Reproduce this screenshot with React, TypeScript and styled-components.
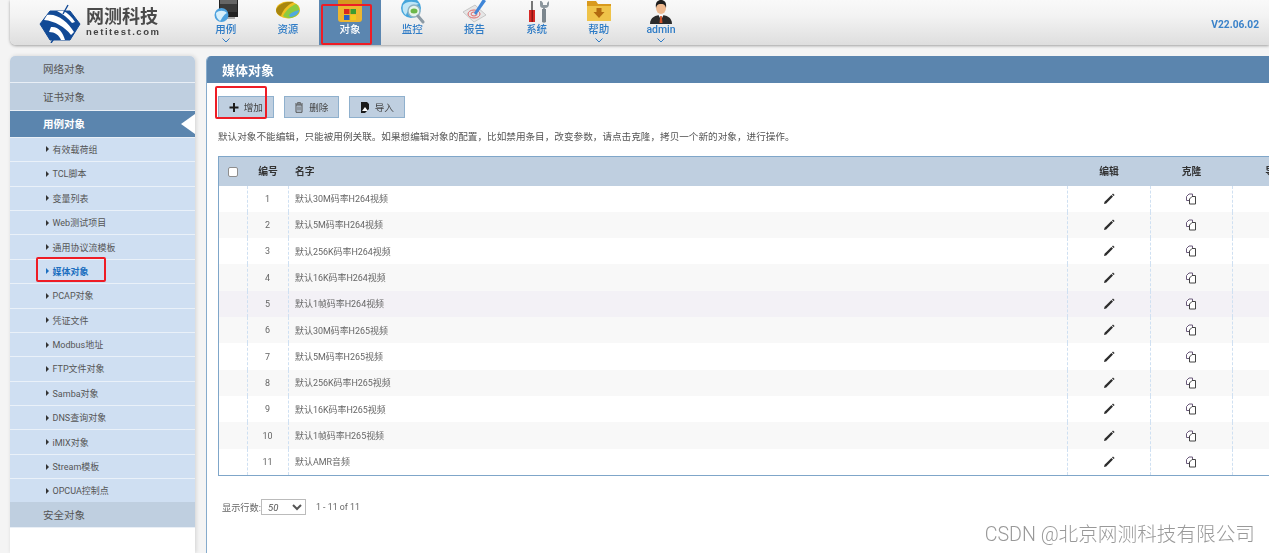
import React from "react";
import styled, { createGlobalStyle } from "styled-components";

const FONT = `Roboto, "Noto Sans CJK SC", "Liberation Sans", sans-serif`;

const Global = createGlobalStyle`
  html, body { margin: 0; padding: 0; height: 553px; overflow: hidden; background: #f4f4f4; }
  body { font-family: ${FONT}; }
  * { box-sizing: border-box; }
`;

const Page = styled.div`
  position: relative;
  width: 1269px;
  height: 553px;
  padding-left: 10px;
  overflow: hidden;
  filter: blur(0.35px);
`;

const Header = styled.header`
  display: flex;
  align-items: stretch;
  height: 45px;
  background: linear-gradient(#f9f9f9, #f3f3f3 35%, #dedede);
  border-radius: 0 0 0 6px;
  box-shadow: 0 1px 3px rgba(0, 0, 0, 0.35);
`;

const LogoBox = styled.div`
  display: flex;
  align-items: center;
  gap: 5px;
  width: 184.6px;
  padding: 0 0 0 29px;
`;

const LogoText = styled.div`
  display: flex;
  flex-direction: column;
  margin-top: -1px;
`;

const LogoCn = styled.span`
  font-size: 18px;
  line-height: 20px;
  font-weight: 700;
  color: #4a4a4a;
  white-space: nowrap;
`;

const LogoEn = styled.span`
  font-family: "Liberation Sans", sans-serif;
  font-size: 9.5px;
  line-height: 10px;
  font-weight: 700;
  letter-spacing: 1.55px;
  color: #444;
  white-space: nowrap;
`;

const Nav = styled.nav`
  display: flex;
`;

const NavItem = styled.div<{ $active?: boolean }>`
  position: relative;
  width: 62.2px;
  display: flex;
  flex-direction: column;
  align-items: center;
  overflow: hidden;
  background: ${(p) => (p.$active ? "#5b86b0" : "transparent")};
  color: ${(p) => (p.$active ? "#fff" : "#2f7cc6")};
`;

const NavIcon = styled.svg`
  display: block;
  width: 26px;
  height: 24px;
  flex: none;
`;

const NavLabel = styled.span`
  font-size: 10.5px;
  line-height: 12px;
  font-weight: 500;
  white-space: nowrap;
`;

const Chevron = styled.svg`
  display: block;
  width: 8px;
  height: 5px;
  margin-top: 2px;
  flex: none;
`;

const Version = styled.div`
  margin: 3px 0 0 auto;
  padding-right: 10px;
  align-self: center;
  font-size: 10.2px;
  font-weight: 700;
  color: #3a82c9;
`;

const Body = styled.div`
  display: flex;
  gap: 11px;
  margin-top: 11px;
  height: 497px;
`;

const Sidebar = styled.aside`
  width: 185px;
  flex: none;
  background: #fff;
  border-radius: 5px 5px 0 0;
  overflow: hidden;
  box-shadow: 1px 0 4px rgba(0, 0, 0, 0.14);
`;

const TopItem = styled.div<{ $active?: boolean; $last?: boolean }>`
  position: relative;
  height: ${(p) => (p.$last ? "26.4px" : p.$active ? "27px" : "27.4px")};
  margin-top: ${(p) => (p.$last ? "-1.6px" : "0")};
  display: flex;
  align-items: center;
  padding: 0 0 1px 33px;
  font-size: 10.5px;
  font-weight: ${(p) => (p.$active ? 700 : 400)};
  color: ${(p) => (p.$active ? "#fff" : "#555")};
  background: ${(p) => (p.$active ? "#5b85ae" : "#bfcfe0")};
  border-bottom: 1px solid #e9eff6;
`;

const ActiveNotch = styled.span`
  position: absolute;
  right: 0;
  top: 3px;
  width: 0;
  height: 0;
  border-style: solid;
  border-width: 10px 14px 10px 0;
  border-color: transparent #fff transparent transparent;
`;

const SubItem = styled.div<{ $active?: boolean }>`
  height: 24.4px;
  display: flex;
  align-items: center;
  gap: 3.5px;
  padding-left: 36px;
  font-size: 9px;
  white-space: nowrap;
  background: #cfdff2;
  border-bottom: 1px solid #eaf1f9;
  color: ${(p) => (p.$active ? "#1c6fc0" : "#555")};
  font-weight: ${(p) => (p.$active ? 700 : 400)};
`;

const Caret = styled.span<{ $active?: boolean }>`
  width: 0;
  height: 0;
  flex: none;
  border-style: solid;
  border-width: 3px 0 3px 3px;
  border-color: transparent transparent transparent ${(p) => (p.$active ? "#1c6fc0" : "#333")};
`;

const Main = styled.main`
  flex: 1;
  min-width: 0;
  background: #fff;
  border-left: 1px solid #86abcc;
  border-radius: 5px 0 0 0;
  overflow: hidden;
`;

const TitleBar = styled.div`
  height: 27px;
  display: flex;
  align-items: center;
  padding-left: 15px;
  background: #5b85ae;
  color: #fff;
  font-size: 13px;
  font-weight: 700;
`;

const Content = styled.div`
  padding: 13px 0 0 11px;
`;

const Toolbar = styled.div`
  display: flex;
  gap: 10px;
`;

const ToolButton = styled.button`
  display: flex;
  align-items: center;
  justify-content: center;
  gap: 5px;
  width: 55.5px;
  height: 22px;
  padding: 0;
  font-family: ${FONT};
  font-size: 9.6px;
  color: #444;
  background: #bfcfe0;
  border: 1px solid #8fb0cd;
`;

const ToolIcon = styled.svg`
  width: 10px;
  height: 11px;
  flex: none;
`;

const Note = styled.p`
  margin: 12px 0 0;
  font-size: 9.62px;
  line-height: 14px;
  color: #555;
  white-space: nowrap;
`;

const DataTable = styled.table`
  margin-top: 12px;
  width: 1100px;
  table-layout: fixed;
  border-collapse: separate;
  border-spacing: 0;
  border-top: 1px solid #7fa6c9;
  border-left: 1px solid #7fa6c9;
  border-bottom: 1px solid #7fa6c9;
`;

const HeadCell = styled.th<{ $left?: boolean }>`
  height: 28.5px;
  padding: ${(p) => (p.$left ? "0 0 0 6px" : "0 1px 0 0")};
  text-align: ${(p) => (p.$left ? "left" : "center")};
  font-size: 9.8px;
  font-weight: 700;
  color: #333;
  background: #bfcfe0;
`;

const Row = styled.tr<{ $tone: string }>`
  background: ${(p) => p.$tone};
`;

const Cell = styled.td<{ $left?: boolean }>`
  height: 26.34px;
  padding: ${(p) => (p.$left ? "0 0 0 6px" : "0 1px 0 0")};
  text-align: ${(p) => (p.$left ? "left" : "center")};
  font-size: 8.95px;
  color: #666;
  white-space: nowrap;
  border-right: 1px dashed #cfe0f2;
`;

const Check = styled.span`
  display: inline-block;
  width: 10px;
  height: 10px;
  vertical-align: middle;
  background: #fff;
  border: 1px solid #8e8e8e;
  border-radius: 2px;
`;

const RowIcon = styled.svg`
  display: inline-block;
  vertical-align: middle;
  width: 12px;
  height: 12px;
`;

const Pager = styled.div`
  display: flex;
  align-items: center;
  margin: 23px 0 0 4px;
  font-size: 9.2px;
  color: #666;
`;

const PageSelect = styled.select`
  width: 45px;
  height: 16px;
  margin-left: 0;
  padding: 0 0 0 2px;
  font-family: ${FONT};
  font-size: 9.5px;
  font-style: italic;
  color: #555;
  background: #fff;
  border: 1px solid #bbb;
  border-radius: 0;
`;

const PageInfo = styled.span`
  margin-left: 10px;
  font-size: 8.8px;
`;

const RedBox = styled.div<{ $x: number; $y: number; $w: number; $h: number }>`
  position: absolute;
  left: ${(p) => p.$x}px;
  top: ${(p) => p.$y}px;
  width: ${(p) => p.$w}px;
  height: ${(p) => p.$h}px;
  border: 2px solid #ee1c25;
  border-radius: 2px;
  pointer-events: none;
`;

const Watermark = styled.div`
  position: absolute;
  right: 14px;
  bottom: 7px;
  font-size: 19.65px;
  line-height: 22px;
  font-weight: 300;
  color: #999;
  white-space: nowrap;
`;

const LogoMark = () => (
  <svg width="42" height="40" viewBox="0 0 42 40" style={{ flex: "none" }}>
    <path d="M11 8H31L41 21 31 37H11L1 21Z" fill="#124a96" stroke="#124a96" strokeWidth="1" strokeLinejoin="round" />
    <path d="M8 12C18 10 29 19 35 29L32 32C26 24 16 18 5 17Z" fill="#fff" />
    <path d="M12 24C19 23 24 29 26 37H22C20 32 16 29 10 29Z" fill="#fff" />
    <path d="M18 8H24C29 10 33 14 36 19L33 20C29 15 24 11 18 8Z" fill="#fff" />
    <path d="M29 2 24 11M16 34 12 40" stroke="#124a96" strokeWidth="1.4" />
  </svg>
);

const IconCase = () => (
  <NavIcon viewBox="0 0 26 24">
    <path d="M6 -1H25V17H6Z" fill="#222" />
    <path d="M7 -1H24V12H7Z" fill="#3a3a3a" />
    <path d="M7 -1H24V4H7Z" fill="#666" />
    <path d="M11 17H22V19H11Z" fill="#aaa" />
    <circle cx="8.5" cy="15" r="7" fill="#4da1de" />
    <path d="M3 13C6 10 11 10 14 13 10 15 9 19 7 21 4 19 3 16 3 13Z" fill="#d7effb" />
  </NavIcon>
);

const IconResource = () => (
  <NavIcon viewBox="0 0 26 24">
    <ellipse cx="13" cy="10" rx="12" ry="8.5" fill="#f0c020" />
    <path d="M1 10C3 4 11 1 19 2 14 4 8 9 6 16 3 15 1 13 1 10Z" fill="#a8860f" />
    <path d="M8 16C11 10 16 6 21 4 25 7 25 12 22 15 18 19 12 19 8 16Z" fill="#8ccb3f" />
    <path d="M14 15C17 12 20 11 24.5 10 24 13 20 17 15 17Z" fill="#52a9de" />
  </NavIcon>
);

const IconObject = () => (
  <NavIcon viewBox="0 0 26 24">
    <path d="M1 0H25V19Q25 22 22 22H4Q1 22 1 19Z" fill="#edb62f" />
    <path d="M1 0H25V4H1Z" fill="#d59a1f" />
    <rect x="7" y="9" width="5.5" height="5" fill="#d9281e" />
    <rect x="13.5" y="9" width="5.5" height="5" fill="#3c9c30" />
    <rect x="7" y="15" width="5.5" height="5" fill="#2a62c4" />
    <rect x="13.5" y="15" width="5.5" height="5" fill="#f0cb20" />
  </NavIcon>
);

const IconMonitor = () => (
  <NavIcon viewBox="0 0 26 24">
    <circle cx="12" cy="8" r="10" fill="#46a6dc" />
    <path d="M4 5C8 1 15 1 20 4 15 5 8 10 7 15 4 13 3 9 4 5Z" fill="#bfe6f7" />
    <circle cx="15" cy="11" r="6" fill="#e6f4ea" stroke="#8fb3c4" strokeWidth="1.5" />
    <ellipse cx="15" cy="11" rx="3.5" ry="2.5" fill="#6cb84a" />
    <path d="M19 16 24 22" stroke="#8b9aa5" strokeWidth="3" strokeLinecap="round" />
  </NavIcon>
);

const IconReport = () => (
  <NavIcon viewBox="0 0 26 24">
    <path d="M2 12 14 5 25 15 13 22Z" fill="#e6e6e6" stroke="#bdbdbd" strokeWidth="0.8" />
    <ellipse cx="13" cy="14" rx="6" ry="4" fill="none" stroke="#e2686a" strokeWidth="1" />
    <ellipse cx="13" cy="14" rx="3" ry="2" fill="none" stroke="#e2686a" strokeWidth="1" />
    <path d="M13 13 22 -1 25 1 15 15Z" fill="#3f86d8" />
  </NavIcon>
);

const IconSystem = () => (
  <NavIcon viewBox="0 0 26 24">
    <path d="M7 1 9 1 9 10 7 10Z" fill="#777" />
    <path d="M5 10H11V22H5Z" fill="#d62a26" />
    <path d="M7.5 10H9V22H7.5Z" fill="#8e1512" />
    <path d="M16 1V5Q16 8 19 8V22H21V8Q25 8 25 4V1L23 3V5H19V3L17.5 1Z" fill="#8d979e" />
    <path d="M18 9H22V22Q20 23.5 18 22Z" fill="#7c868d" />
  </NavIcon>
);

const IconHelp = () => (
  <NavIcon viewBox="0 0 26 24">
    <path d="M1 1H10L12 4H25V21H1Z" fill="#d99a1e" />
    <path d="M1 6H25V21H1Z" fill="#efc349" />
    <path d="M10.5 8H15.5V12H18.5L13 18 7.5 12H10.5Z" fill="#b26a10" />
  </NavIcon>
);

const IconAdmin = () => (
  <NavIcon viewBox="0 0 26 24">
    <path d="M2 24C2 17 8 15 13 15S24 17 24 24Z" fill="#2b2b2b" />
    <path d="M10.5 15H15.5L13 20Z" fill="#fff" />
    <path d="M12.2 16H13.8L14.5 23H11.5Z" fill="#d2542a" />
    <ellipse cx="13" cy="8" rx="5" ry="6" fill="#eeb98f" />
    <path d="M8 8C7 2 10 0 13 0S19 2 18 8C17 4 15 4 13 4S9 4 8 8Z" fill="#1e1e1e" />
  </NavIcon>
);

const navItems: { label: string; Icon: () => React.ReactElement; menu?: boolean; active?: boolean }[] = [
  { label: "用例", Icon: IconCase, menu: true },
  { label: "资源", Icon: IconResource },
  { label: "对象", Icon: IconObject, active: true },
  { label: "监控", Icon: IconMonitor },
  { label: "报告", Icon: IconReport },
  { label: "系统", Icon: IconSystem },
  { label: "帮助", Icon: IconHelp, menu: true },
  { label: "admin", Icon: IconAdmin, menu: true },
];

const subItems = [
  "有效载荷组", "TCL脚本", "变量列表", "Web测试项目", "通用协议流模板", "媒体对象", "PCAP对象", "凭证文件",
  "Modbus地址", "FTP文件对象", "Samba对象", "DNS查询对象", "iMIX对象", "Stream模板", "OPCUA控制点",
];

const rows = [
  "默认30M码率H264视频", "默认5M码率H264视频", "默认256K码率H264视频", "默认16K码率H264视频", "默认1帧码率H264视频",
  "默认30M码率H265视频", "默认5M码率H265视频", "默认256K码率H265视频", "默认16K码率H265视频", "默认1帧码率H265视频",
  "默认AMR音频",
];

const rowTone = (i: number) => (i === 4 ? "#f3f1f6" : i % 2 === 1 ? "#f8f8f8" : "#fff");

const Pencil = () => (
  <RowIcon viewBox="0 0 12 12">
    <path d="M1 11 1.6 8.8 8.4 2 10 3.6 3.2 10.4Z" fill="#2c2c2c" />
    <path d="M9 1.4 10 0.4 11.6 2 10.6 3Z" fill="#2c2c2c" />
  </RowIcon>
);

const Clone = () => (
  <RowIcon viewBox="0 0 12 12">
    <path d="M5 7.5H1.5V3.5L4 1H7.5V4" fill="#fff" stroke="#6a5a7a" strokeWidth="1" />
    <path d="M4.5 6 7 3.5H10.5V11H4.5Z" fill="#fff" stroke="#444" strokeWidth="1" />
  </RowIcon>
);

export default function App() {
  return (
    <Page>
      <Global />
      <Header>
        <LogoBox>
          <LogoMark />
          <LogoText>
            <LogoCn>网测科技</LogoCn>
            <LogoEn>netitest.com</LogoEn>
          </LogoText>
        </LogoBox>
        <Nav>
          {navItems.map(({ label, Icon, menu, active }) => (
            <NavItem key={label} $active={active}>
              <Icon />
              <NavLabel>{label}</NavLabel>
              {menu && (
                <Chevron viewBox="0 0 8 5">
                  <path d="M0.5 0.5 4 4 7.5 0.5" fill="none" stroke="#2f7cc6" strokeWidth="1" />
                </Chevron>
              )}
            </NavItem>
          ))}
        </Nav>
        <Version>V22.06.02</Version>
      </Header>
      <Body>
        <Sidebar>
          <TopItem>网络对象</TopItem>
          <TopItem>证书对象</TopItem>
          <TopItem $active>
            用例对象
            <ActiveNotch />
          </TopItem>
          {subItems.map((s) => (
            <SubItem key={s} $active={s === "媒体对象"}>
              <Caret $active={s === "媒体对象"} />
              {s}
            </SubItem>
          ))}
          <TopItem $last>安全对象</TopItem>
        </Sidebar>
        <Main>
          <TitleBar>媒体对象</TitleBar>
          <Content>
            <Toolbar>
              <ToolButton>
                <ToolIcon viewBox="0 0 10 10">
                  <path d="M4 0.5H6V4H9.5V6H6V9.5H4V6H0.5V4H4Z" fill="#1c1c1c" />
                </ToolIcon>
                增加
              </ToolButton>
              <ToolButton>
                <ToolIcon viewBox="0 0 10 11">
                  <path d="M3.5 1.5V0.7H6.5V1.5M1 2H9M2 3V10.3H8V3Z" fill="none" stroke="#555" strokeWidth="1" />
                  <path d="M4 4.5V8.5M6 4.5V8.5" stroke="#555" strokeWidth="0.9" />
                </ToolIcon>
                删除
              </ToolButton>
              <ToolButton>
                <ToolIcon viewBox="0 0 10 11">
                  <path d="M1 0H7L9 2V11H1Z" fill="#1a1a1a" />
                  <path d="M5 5 8 9H2Z" fill="#fff" />
                  <path d="M9 7V11H5Z" fill="#bfcfe0" />
                </ToolIcon>
                导入
              </ToolButton>
            </Toolbar>
            <Note>默认对象不能编辑，只能被用例关联。如果想编辑对象的配置，比如禁用条目，改变参数，请点击克隆，拷贝一个新的对象，进行操作。</Note>
            <DataTable>
              <colgroup>
                <col style={{ width: 29 }} />
                <col style={{ width: 41 }} />
                <col style={{ width: 779 }} />
                <col style={{ width: 83 }} />
                <col style={{ width: 82 }} />
                <col />
              </colgroup>
              <thead>
                <tr>
                  <HeadCell><Check /></HeadCell>
                  <HeadCell>编号</HeadCell>
                  <HeadCell $left>名字</HeadCell>
                  <HeadCell>编辑</HeadCell>
                  <HeadCell>克隆</HeadCell>
                  <HeadCell>导出</HeadCell>
                </tr>
              </thead>
              <tbody>
                {rows.map((name, i) => (
                  <Row key={i} $tone={rowTone(i)}>
                    <Cell />
                    <Cell>{i + 1}</Cell>
                    <Cell $left>{name}</Cell>
                    <Cell><Pencil /></Cell>
                    <Cell><Clone /></Cell>
                    <Cell />
                  </Row>
                ))}
              </tbody>
            </DataTable>
            <Pager>
              显示行数:
              <PageSelect defaultValue="50">
                <option value="50">50</option>
              </PageSelect>
              <PageInfo>1 - 11 of 11</PageInfo>
            </Pager>
          </Content>
        </Main>
      </Body>
      <RedBox $x={321} $y={4} $w={51} $h={41} />
      <RedBox $x={215} $y={86} $w={52} $h={33} />
      <RedBox $x={36} $y={257} $w={70} $h={25} />
      <Watermark>CSDN @北京网测科技有限公司</Watermark>
    </Page>
  );
}
